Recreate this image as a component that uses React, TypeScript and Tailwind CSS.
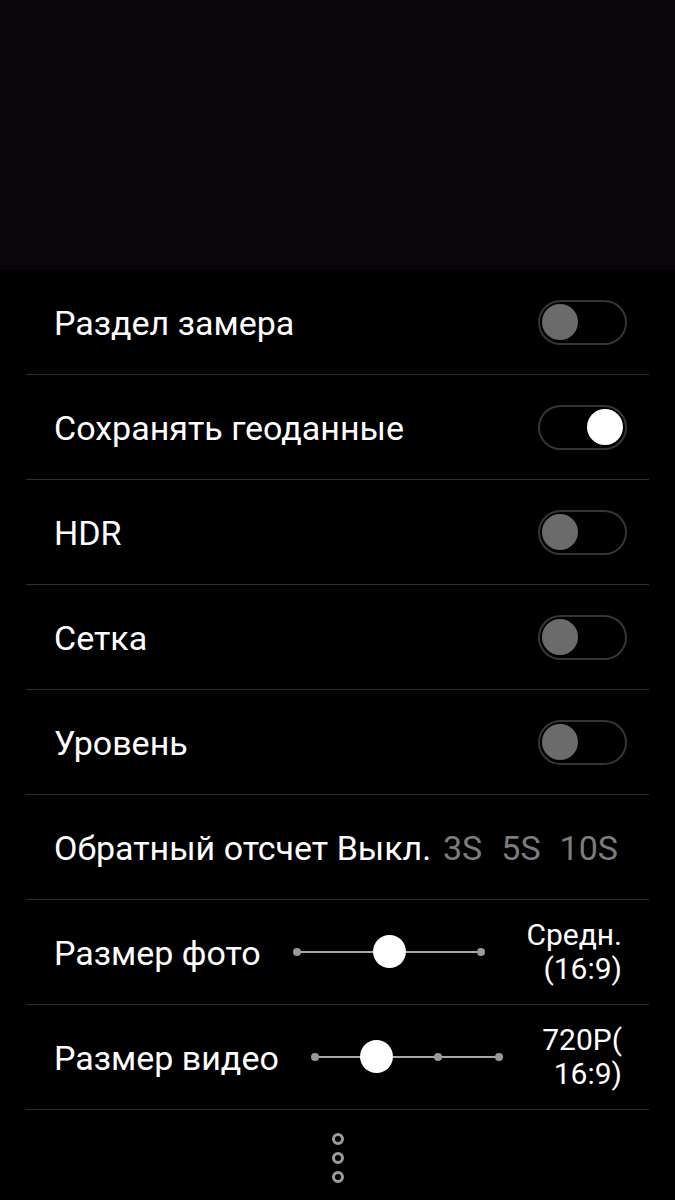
import React from 'react';

function Toggle({ on }: { on?: boolean }) {
  return (
    <div className="w-[89px] h-[45px] rounded-full border-2 border-[#353535] flex items-center px-[2px]">
      {on ? (
        <div className="ml-auto w-[36px] h-[36px] rounded-full bg-white" />
      ) : (
        <div className="w-[36px] h-[36px] rounded-full bg-[#6b6b6b]" />
      )}
    </div>
  );
}

function Slider({ width, stops, active }: { width: number; stops: number; active: number }) {
  return (
    <div className="relative h-[34px]" style={{ width }}>
      <div className="absolute left-0 right-0 top-[16px] h-[2px] bg-[#a8a8a8]" />
      {Array.from({ length: stops }).map((_, i) => (
        <div
          key={i}
          className="absolute top-[13px] w-[8px] h-[8px] -ml-[4px] rounded-full bg-[#9a9a9a]"
          style={{ left: (width * i) / (stops - 1) }}
        />
      ))}
      <div
        className="absolute top-0 w-[33px] h-[33px] -ml-[16px] rounded-full bg-white"
        style={{ left: (width * active) / (stops - 1) }}
      />
    </div>
  );
}

const toggles: [string, boolean][] = [
  ['Раздел замера', false],
  ['Сохранять геоданные', true],
  ['HDR', false],
  ['Сетка', false],
  ['Уровень', false],
];

export default function App() {
  return (
    <div className="w-[675px] h-[1200px] bg-black text-white overflow-hidden" style={{ fontFamily: 'Roboto, "Noto Sans", sans-serif' }}>
      <div className="h-[270px] bg-[#0a0508]" />
      <div className="px-[26px]">
        {toggles.map(([label, on]) => (
          <div key={label} className="h-[105px] flex items-center justify-between pl-[28px] pr-[22px] border-b border-[#2e2e2e]">
            <span className="text-[34px] leading-none pt-[2px]">{label}</span>
            <Toggle on={on} />
          </div>
        ))}
        <div className="h-[105px] flex items-center pl-[28px] pr-[31px] border-b border-[#2e2e2e]">
          <span className="text-[34px] leading-none pt-[2px]">Обратный отсчет Выкл.</span>
          <div className="ml-auto flex gap-[19px] text-[34px] leading-none pt-[2px] text-[#7c7c7c]">
            <span>3S</span>
            <span>5S</span>
            <span>10S</span>
          </div>
        </div>
        <div className="h-[105px] flex items-center pl-[28px] pr-[27px] border-b border-[#2e2e2e]">
          <span className="text-[34px] leading-none pt-[2px] w-[243px]">Размер фото</span>
          <Slider width={184} stops={3} active={1} />
          <div className="ml-auto text-right text-[30px] leading-[34px]">
            <div>Средн.</div>
            <div>(16:9)</div>
          </div>
        </div>
        <div className="h-[105px] flex items-center pl-[28px] pr-[27px] border-b border-[#2e2e2e]">
          <span className="text-[34px] leading-none pt-[2px] w-[261px]">Размер видео</span>
          <Slider width={184} stops={4} active={1} />
          <div className="ml-auto text-right text-[30px] leading-[34px]">
            <div>720P(</div>
            <div>16:9)</div>
          </div>
        </div>
      </div>
      <div className="flex flex-col items-center gap-[7px] pt-[23px]">
        {[0, 1, 2].map((i) => (
          <div key={i} className="w-[12px] h-[12px] rounded-full border-[3px] border-[#9c9c9c]" />
        ))}
      </div>
    </div>
  );
}
